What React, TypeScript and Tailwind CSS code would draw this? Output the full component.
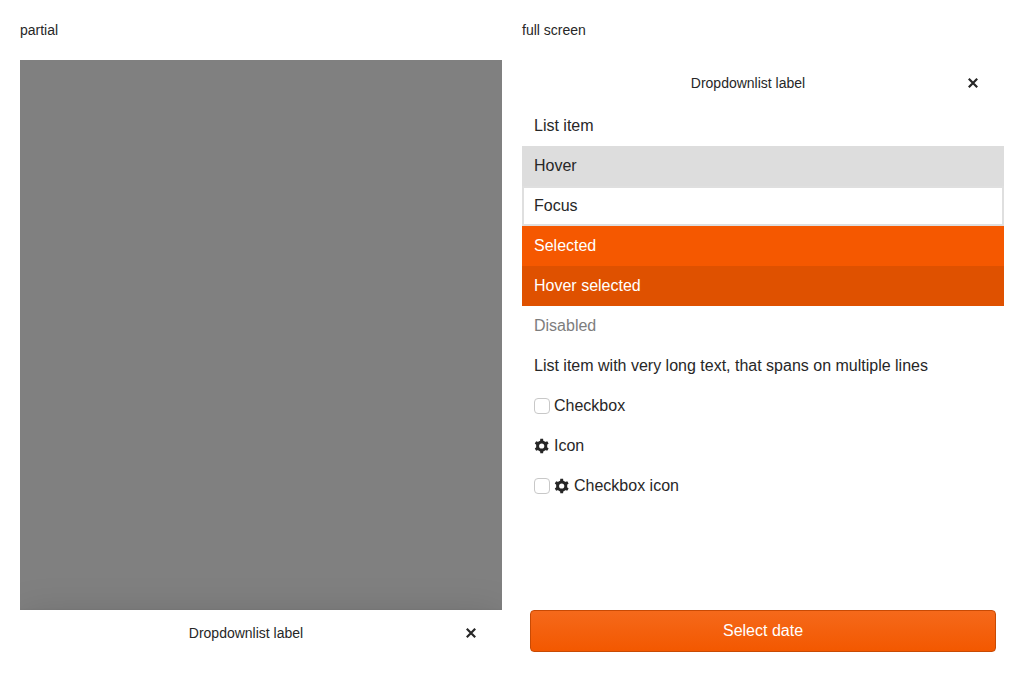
import type { ReactNode } from 'react';

function CloseIcon() {
  return (
    <svg viewBox="0 0 16 16" className="size-4" aria-hidden="true">
      <path d="M3.8 3.8L12.2 12.2M12.2 3.8L3.8 12.2" stroke="currentColor" strokeWidth="2.2" fill="none" />
    </svg>
  );
}

const toothAngles = [0, 60, 120, 180, 240, 300];

function GearIcon() {
  return (
    <svg viewBox="0 0 16 16" className="size-4 shrink-0" aria-hidden="true">
      <circle cx="7.7" cy="8" r="4.1" fill="none" stroke="currentColor" strokeWidth="3" />
      {toothAngles.map((angle) => (
        <path
          key={angle}
          d="M5.3 4.4L6.1 3L6.3 0.8H9.1L9.3 3L10.1 4.4Z"
          fill="currentColor"
          transform={`rotate(${angle} 7.7 8)`}
        />
      ))}
    </svg>
  );
}

function SheetHeader({ title }: { title: string }) {
  return (
    <header className="flex items-center px-4 py-2">
      <h2 className="flex-1 text-center text-sm">{title}</h2>
      <button type="button" aria-label="Close" className="flex size-[30px] items-center justify-center">
        <CloseIcon />
      </button>
    </header>
  );
}

type ItemProps = {
  children: ReactNode;
  className?: string;
  selected?: boolean;
  disabled?: boolean;
};

function ListItem({ children, className = '', selected = false, disabled = false }: ItemProps) {
  return (
    <li
      role="option"
      aria-selected={selected}
      aria-disabled={disabled}
      className={`flex items-center gap-1 px-3 py-2 ${className}`}
    >
      {children}
    </li>
  );
}

function Checkbox({ children }: { children: ReactNode }) {
  return (
    <label className="flex items-center gap-1">
      <input
        type="checkbox"
        className="size-4 shrink-0 appearance-none rounded-[4px] border border-[#c8c8c8] bg-white checked:bg-[#f35800]"
      />
      {children}
    </label>
  );
}

export default function App() {
  return (
    <main className="grid min-h-screen grid-cols-2 gap-5 bg-white p-5 font-['Liberation_Sans',Arial,sans-serif] text-base text-[#272727]">
      <section className="flex flex-col gap-5">
        <h1 className="text-sm">partial</h1>
        <div className="flex flex-1 flex-col justify-end overflow-hidden bg-[#808080]">
          <div className="bg-white pb-1 shadow-[0_0_2px_rgba(0,0,0,0.08),0_6px_40px_rgba(0,0,0,0.16)]">
            <SheetHeader title="Dropdownlist label" />
          </div>
        </div>
      </section>

      <section className="flex flex-col gap-5">
        <h1 className="text-sm">full screen</h1>
        <div className="flex flex-1 flex-col bg-white">
          <SheetHeader title="Dropdownlist label" />
          <ul role="listbox" aria-label="Dropdownlist label" className="flex-1">
            <ListItem>List item</ListItem>
            <ListItem className="bg-[#dddddd]">Hover</ListItem>
            <ListItem className="inset-shadow-[0_0_0_2px_#dfdfdf]">Focus</ListItem>
            <ListItem selected className="bg-[#f55800] text-white">
              Selected
            </ListItem>
            <ListItem selected className="bg-[#df5100] text-white">
              Hover selected
            </ListItem>
            <ListItem disabled className="text-[#7d7d7d]">
              Disabled
            </ListItem>
            <ListItem>List item with very long text, that spans on multiple lines</ListItem>
            <ListItem>
              <Checkbox>Checkbox</Checkbox>
            </ListItem>
            <ListItem>
              <GearIcon />
              Icon
            </ListItem>
            <ListItem>
              <Checkbox>
                <GearIcon />
                Checkbox icon
              </Checkbox>
            </ListItem>
          </ul>
          <footer className="flex p-2">
            <button
              type="button"
              className="flex-1 rounded-[4px] border border-[#c84a04] bg-linear-to-b/srgb from-[#f5691b] to-[#f35800] px-4 py-2 text-white"
            >
              Select date
            </button>
          </footer>
        </div>
      </section>
    </main>
  );
}
